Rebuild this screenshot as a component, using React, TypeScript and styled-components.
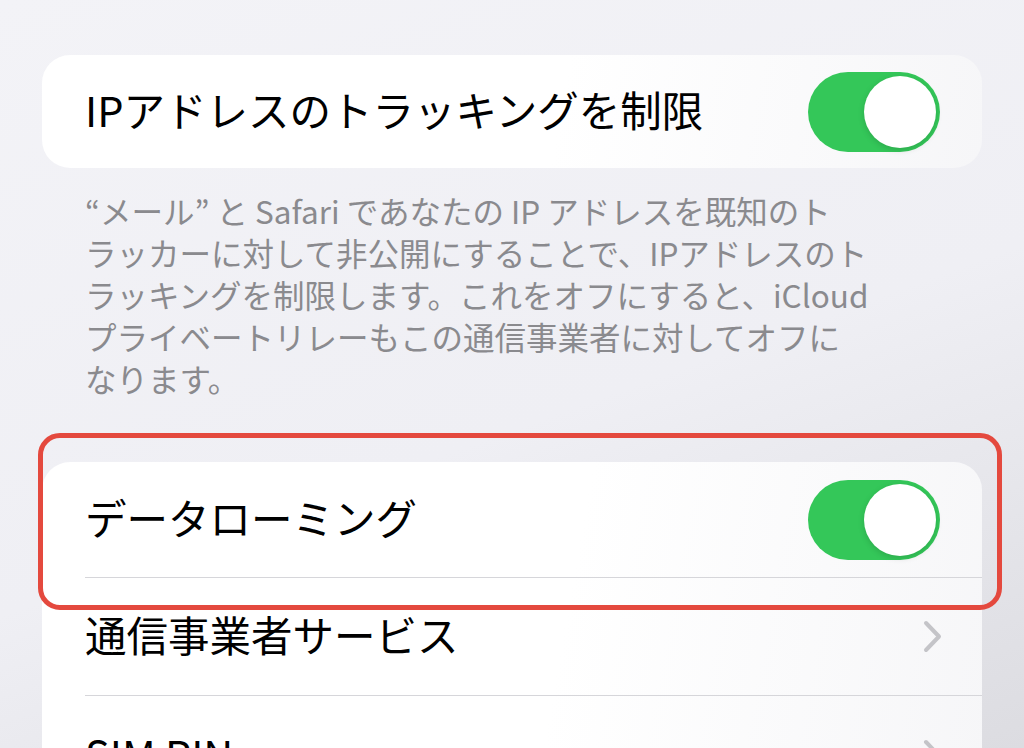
import React from "react";
import styled, { createGlobalStyle } from "styled-components";

const GlobalStyle = createGlobalStyle`
  html, body {
    margin: 0;
    padding: 0;
  }
  body {
    width: 1024px;
    height: 748px;
    overflow: hidden;
    background: linear-gradient(160deg, #f3f3f7 0%, #efeff4 55%, #dcdce1 100%);
    font-family: "Noto Sans CJK JP", "Noto Sans", sans-serif;
    -webkit-font-smoothing: antialiased;
  }
`;

const Page = styled.div`
  display: flex;
  flex-direction: column;
  padding: 55px 42px 0 42px;
`;

const Card = styled.div`
  position: relative;
  background: linear-gradient(100deg, #ffffff 55%, #f6f6f8 100%);
  border-radius: 28px;
`;

const ListCard = styled(Card)`
  margin-top: 63px;
  border-radius: 28px 28px 0 0;
`;

const Row = styled.div<{ $height: number; $divider?: boolean }>`
  display: flex;
  align-items: center;
  justify-content: space-between;
  height: ${(p) => p.$height}px;
  margin-left: 43px;
  padding-right: 42px;
  box-sizing: border-box;
  border-bottom: ${(p) => (p.$divider ? "1.5px solid #d6d6da" : "none")};
`;

const Label = styled.span`
  font-size: 41.5px;
  color: #000;
  line-height: 1;
  margin-top: -3px;
`;

const Footer = styled.p`
  margin: 21px 0 0 43px;
  font-size: 31.5px;
  line-height: 42px;
  color: #8a8a8e;
`;

const Track = styled.div`
  position: relative;
  width: 132px;
  height: 80px;
  border-radius: 40px;
  background: #34c759;
  flex-shrink: 0;
`;

const Knob = styled.div`
  position: absolute;
  top: 4px;
  right: 4px;
  width: 72px;
  height: 72px;
  border-radius: 50%;
  background: #ffffff;
  box-shadow: 0 2px 6px rgba(0, 0, 0, 0.15);
`;

const Chevron = styled.svg`
  width: 19px;
  height: 33px;
  margin-right: -2px;
  flex-shrink: 0;
`;

const Highlight = styled.div`
  position: absolute;
  top: -29px;
  left: -4px;
  right: -20px;
  height: 177px;
  border: 5px solid #e4493e;
  border-radius: 22px;
  box-sizing: border-box;
  pointer-events: none;
`;

function Toggle() {
  return (
    <Track>
      <Knob />
    </Track>
  );
}

function Disclosure() {
  return (
    <Chevron viewBox="0 0 19 33">
      <polyline
        points="3,3 16,16.5 3,30"
        fill="none"
        stroke="#c4c4c8"
        strokeWidth="4"
        strokeLinecap="round"
        strokeLinejoin="round"
      />
    </Chevron>
  );
}

export default function App() {
  return (
    <>
      <GlobalStyle />
      <Page>
        <Card>
          <Row $height={113}>
            <Label>IPアドレスのトラッキングを制限</Label>
            <Toggle />
          </Row>
        </Card>
        <Footer>
          “メール” と Safari であなたの IP アドレスを既知のト
          <br />
          ラッカーに対して非公開にすることで、IPアドレスのト
          <br />
          ラッキングを制限します。これをオフにすると、iCloud
          <br />
          プライベートリレーもこの通信事業者に対してオフに
          <br />
          なります。
        </Footer>
        <ListCard>
          <Row $height={116} $divider>
            <Label>データローミング</Label>
            <Toggle />
          </Row>
          <Row $height={118} $divider>
            <Label>通信事業者サービス</Label>
            <Disclosure />
          </Row>
          <Row $height={118}>
            <Label>SIM PIN</Label>
            <Disclosure />
          </Row>
          <Highlight />
        </ListCard>
      </Page>
    </>
  );
}
